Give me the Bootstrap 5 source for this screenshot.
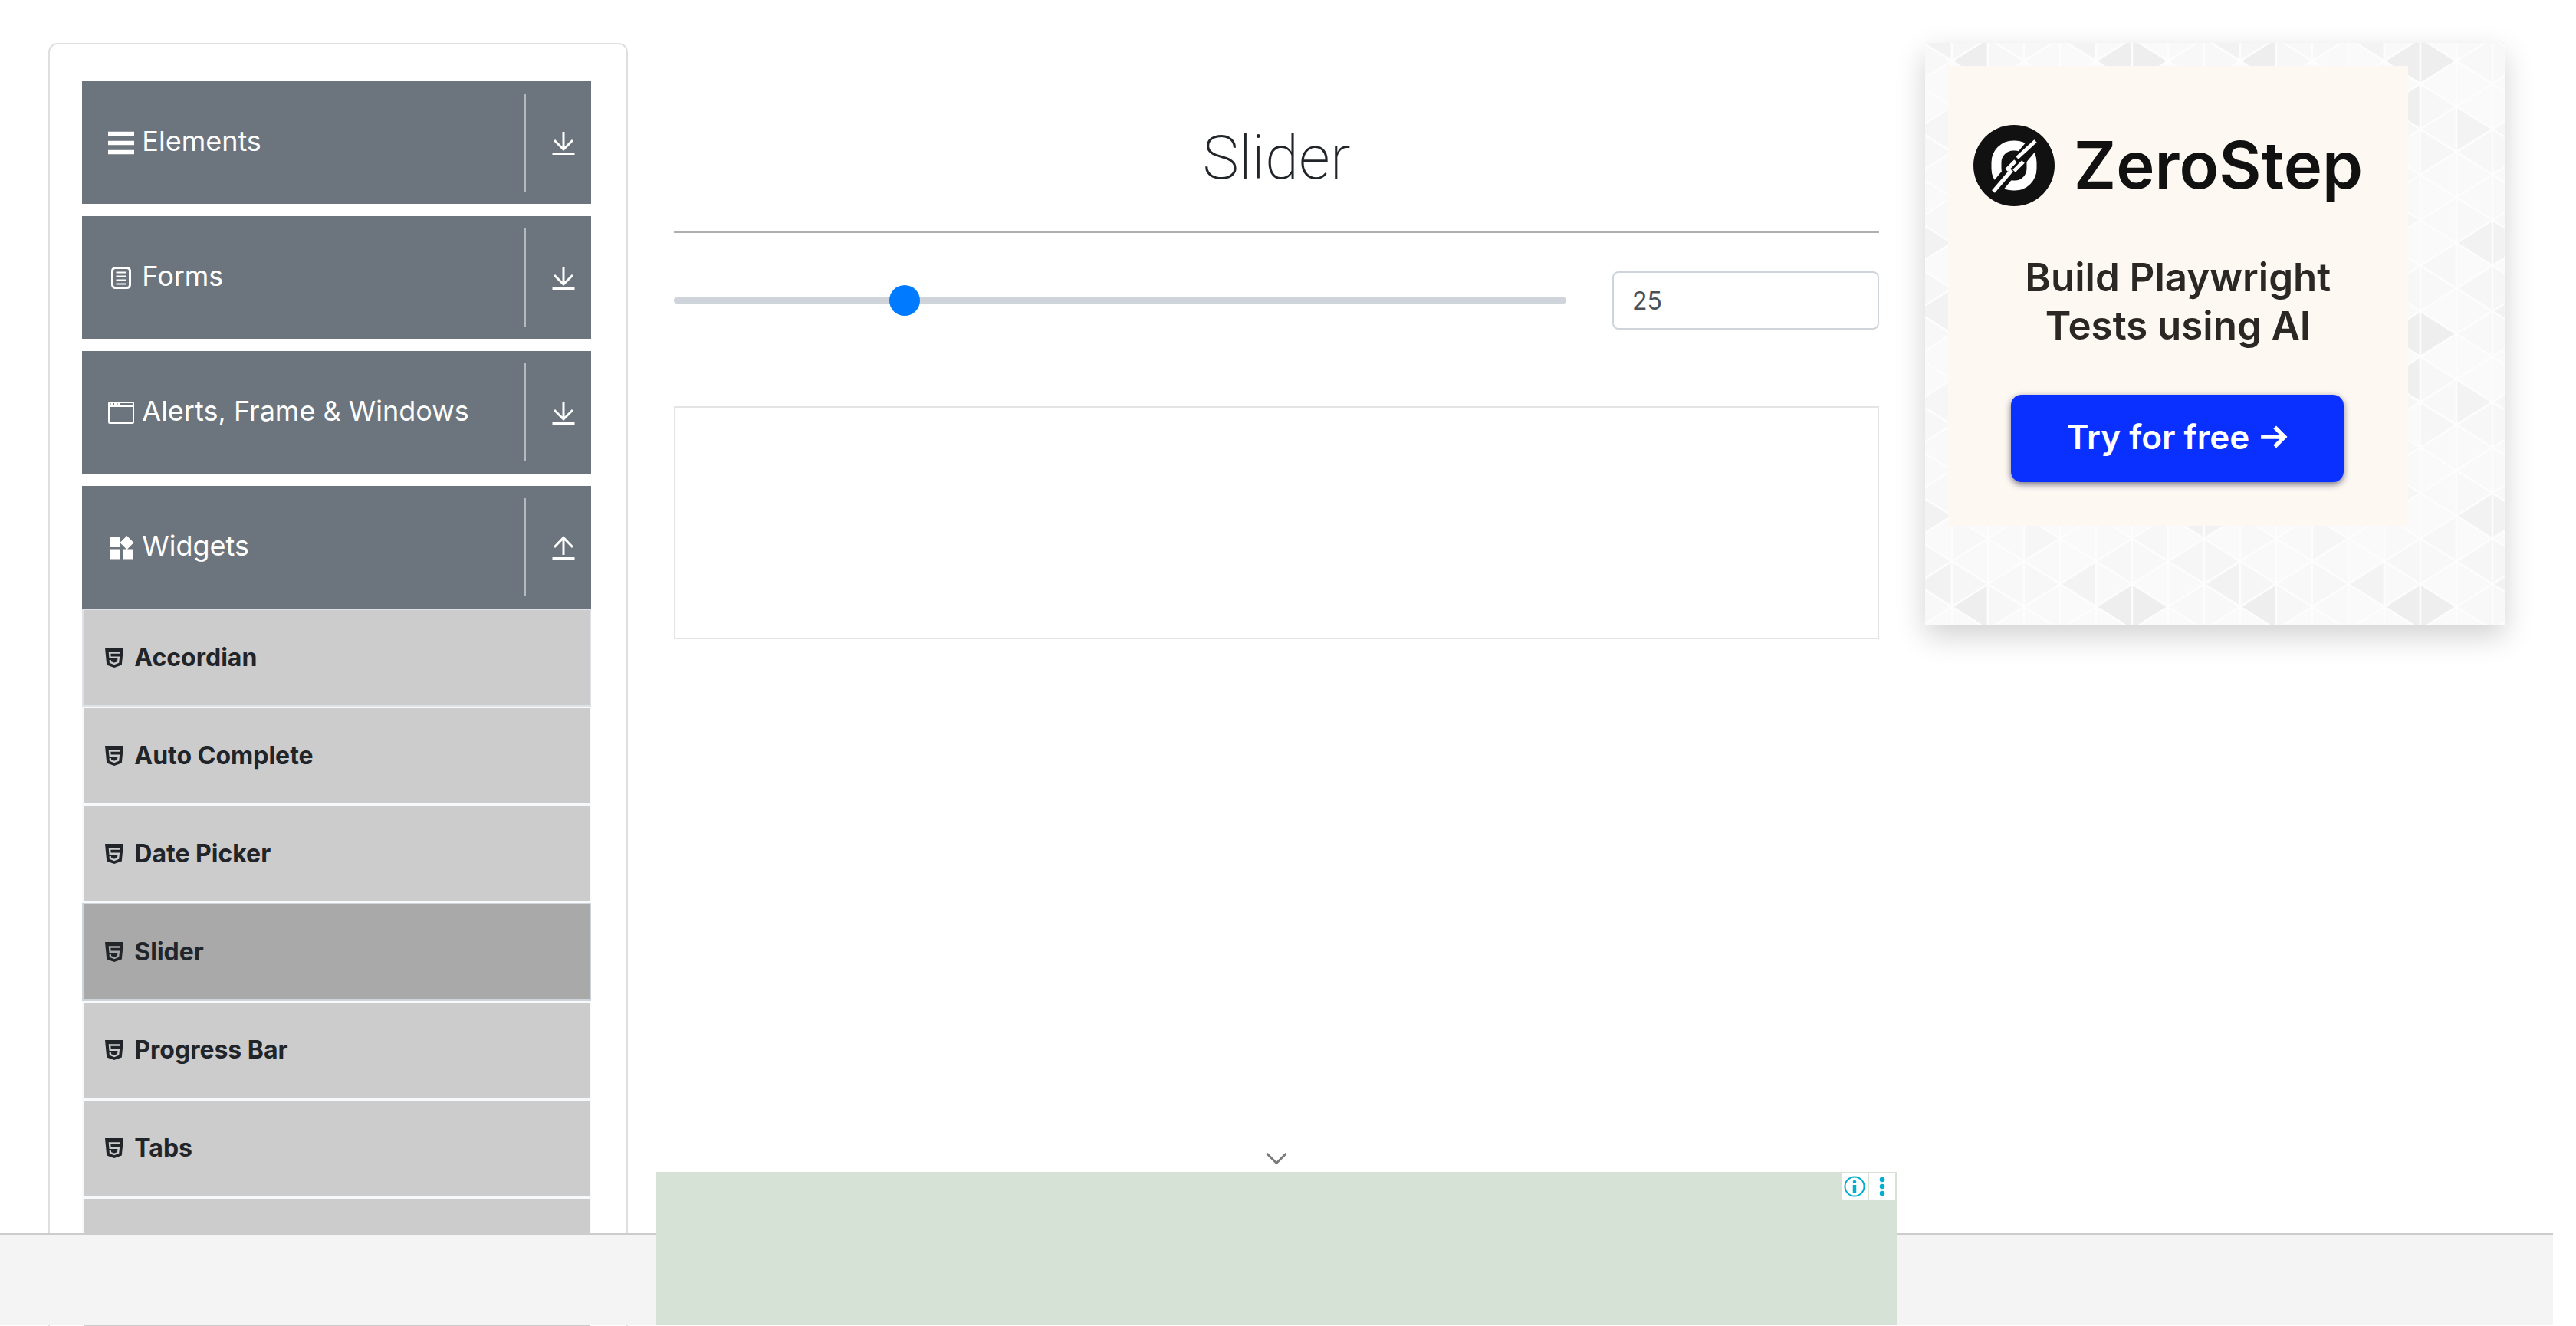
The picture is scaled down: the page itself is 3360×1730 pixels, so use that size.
<!DOCTYPE html>
<html lang="en">
<head>
<meta charset="utf-8">
<meta name="viewport" content="width=device-width, initial-scale=1">
<title>Slider</title>
<link href="https://cdn.jsdelivr.net/npm/bootstrap@5.3.0/dist/css/bootstrap.min.css" rel="stylesheet">
<style>
  body { font-family: Inter, "Liberation Sans", sans-serif; color: #212529; background: #fff; font-size: 32px; line-height: 48px; }
  .page-shell { height: 100vh; overflow: hidden; padding-right: 30px; }
  .page-body { width: 98%; padding: 56px 30px 0; --bs-gutter-x: 60px; }
  .row { --bs-gutter-x: 60px; }

  .side-panel { border: 2px solid #dfdfdf; border-radius: 12px; padding: 48px 46px 48px 42px; height: 1800px; }
  .group-btn { height: 160px; background: #6c757d; color: #fff; border: 0; border-radius: 0; padding: 2px 18px 0 33px; font-size: 36px; line-height: 48px; text-align: left; }
  .group-btn .group-icon { width: 36px; height: 36px; }
  .group-btn .group-name { padding: 0 0 6px 9px; }
  .group-btn .group-rule { width: 2px; height: 128px; background: #b5babe; margin: 0 31px 2px 0; }
  .group-btn .group-arrow { width: 36px; height: 36px; }
  .group-list .list-group-item { height: 128px; padding: 0 28px; background: #ccc; border: 2px solid #f8f9fa; border-radius: 0; color: #212529; font-weight: 700; font-size: 32px; }
  .group-list .list-group-item.item-first { border-color: #dee2e6; }
  .group-list .list-group-item.item-current { background: #a9a9a9; border-color: #ced4da; }
  .group-list svg { width: 24px; height: 28px; margin-right: 14px; }

  .page-title { padding: 102px 0 48px; font-family: Roboto, Inter, sans-serif; font-size: 80px; line-height: 96px; font-weight: 200; border-bottom: 2px solid #afafaf; margin-bottom: 50px; }
  .form-range { height: 40px; }
  .form-range::-webkit-slider-runnable-track { height: 8px; background: #ced4da; border-radius: 4px; }
  .form-range::-webkit-slider-thumb { width: 40px; height: 40px; margin-top: -16px; background: #007bff; border-radius: 50%; }
  .value-box { height: 76px; border: 2px solid #ced4da; border-radius: 8px; padding: 0 24px; font-size: 32px; color: #495057; }
  .empty-frame { margin-top: 100px; height: 304px; border: 2px solid #e4e4e4; }

  .promo { height: 760px; padding: 30px; box-shadow: 0 14px 36px rgba(0, 0, 0, .18); }
  .promo-pattern { position: absolute; inset: 0; width: 100%; height: 100%; }
  .promo-art { width: 600px; height: 600px; background: #fdf8f2; color: #111; padding-top: 76px; }
  .promo-brand { font-size: 85px; line-height: 108px; font-weight: 600; padding-left: 32px; gap: 24px; }
  .promo-brand svg { width: 108px; height: 108px; flex: none; }
  .promo-copy { font-size: 51px; line-height: 63px; font-weight: 600; color: #2a2724; margin-top: 60px; }
  .promo-btn { width: 434px; height: 114px; margin: 59px 0 0 82px; border: 0; border-radius: 14px; background: #0a30ff; color: #fff; font-size: 44px; line-height: 54px; font-weight: 600; box-shadow: 0 3px 9px rgba(20, 20, 60, .6); gap: 12px; padding-bottom: 10px; }
  .promo-btn svg { width: 38px; height: 38px; }

  .page-footer { position: fixed; left: 0; right: 30px; bottom: 1px; height: 120px; background: #f4f4f4; border-top: 2px solid #ccc; }
  .anchor-wrap { position: fixed; left: 0; right: 30px; bottom: 1px; z-index: 5; pointer-events: none; }
  .anchor-wrap button, .anchor-wrap a { pointer-events: auto; }
  .anchor-close { border: 0; background: transparent; padding: 0; width: 48px; height: 36px; line-height: 0; }
  .anchor-ad { width: 1618px; height: 200px; background: #d7e2d6; padding: 2px; gap: 2px; }
  .ad-choice { width: 34px; height: 34px; background: #fff; line-height: 0; }
</style>
<script src="https://cdn.jsdelivr.net/npm/bootstrap@5.3.0/dist/js/bootstrap.bundle.min.js"></script>
</head>
<body>
<svg class="d-none" aria-hidden="true">
  <symbol id="i-down" viewBox="0 0 36 36"><path d="M18 3v22M6 14l12 12 12-12M3.500 31.500h29" fill="none" stroke="currentColor" stroke-width="3"/></symbol>
  <symbol id="i-up" viewBox="0 0 36 36"><path d="M18 27V5M6 17L18 4.500 30 17M3.500 31.500h29" fill="none" stroke="currentColor" stroke-width="3"/></symbol>
  <symbol id="i-html" viewBox="2 0 24 28"><path d="M2 1h24l-2.200 22.500L14 27l-9.800-3.500z" fill="currentColor"/><path d="M21.500 7.500H8l.6 6.200h11.200l-.7 6.300-5.100 1.900-5-1.900-.3-2.800" fill="none" stroke="var(--cut, #ccc)" stroke-width="2.400"/></symbol>
</svg>

<div class="page-shell">
  <div class="container-fluid page-body">
    <div class="row">
      <nav class="col-3" aria-label="Sections">
        <div class="side-panel">
          <button type="button" class="btn group-btn d-flex align-items-center w-100 mb-3">
            <svg class="group-icon" viewBox="0 0 36 36"><path d="M1 5.500h34M1 17.500h34M1 29.500h34" stroke="#fff" stroke-width="5.500"/></svg>
            <span class="group-name flex-grow-1">Elements</span><span class="group-rule"></span>
            <svg class="group-arrow"><use href="#i-down"/></svg>
          </button>
          <button type="button" class="btn group-btn d-flex align-items-center w-100 mb-3">
            <svg class="group-icon" viewBox="0 0 36 36" fill="none" stroke="#fff"><rect x="6.500" y="4.500" width="23" height="26" rx="4" stroke-width="3"/><path d="M11.500 10.500h13M11.500 15.500h13M11.500 20.500h13M11.500 25.500h13" stroke-width="2"/></svg>
            <span class="group-name flex-grow-1">Forms</span><span class="group-rule"></span>
            <svg class="group-arrow"><use href="#i-down"/></svg>
          </button>
          <button type="button" class="btn group-btn d-flex align-items-center w-100 mb-3">
            <svg class="group-icon" viewBox="0 0 36 36" fill="none" stroke="#fff" stroke-width="2"><rect x="2" y="4" width="32" height="27" rx="1.500"/><path d="M2 9h32"/><path d="M4.500 6.500h3M9 6.500h3M13.500 6.500h3" stroke-width="3"/></svg>
            <span class="group-name flex-grow-1">Alerts, Frame &amp; Windows</span><span class="group-rule"></span>
            <svg class="group-arrow"><use href="#i-down"/></svg>
          </button>
          <button type="button" class="btn group-btn d-flex align-items-center w-100" aria-expanded="true">
            <svg class="group-icon" viewBox="0 0 36 36" fill="#fff"><path d="M4 4h13v13H4zM4 19.500h13v13H4zM20 19.500h13v13H20zM25.500 2l9 9-9 9-9-9z"/></svg>
            <span class="group-name flex-grow-1">Widgets</span><span class="group-rule"></span>
            <svg class="group-arrow"><use href="#i-up"/></svg>
          </button>
          <div class="group-list">
            <a href="#" class="list-group-item item-first d-flex align-items-center"><svg><use href="#i-html"/></svg>Accordian</a>
            <a href="#" class="list-group-item d-flex align-items-center"><svg><use href="#i-html"/></svg>Auto Complete</a>
            <a href="#" class="list-group-item d-flex align-items-center"><svg><use href="#i-html"/></svg>Date Picker</a>
            <a href="#" class="list-group-item item-current d-flex align-items-center" aria-current="page"><svg style="--cut:#a9a9a9"><use href="#i-html"/></svg>Slider</a>
            <a href="#" class="list-group-item d-flex align-items-center"><svg><use href="#i-html"/></svg>Progress Bar</a>
            <a href="#" class="list-group-item d-flex align-items-center"><svg><use href="#i-html"/></svg>Tabs</a>
            <div class="list-group-item"></div>
            <div class="list-group-item"></div>
          </div>
        </div>
      </nav>

      <main class="col-6">
        <h1 class="page-title text-center">Slider</h1>
        <div class="row align-items-center">
          <div class="col-9 d-flex"><input type="range" class="form-range" id="range" min="0" max="100" value="25" aria-label="Slider"></div>
          <div class="col-3"><input type="text" class="form-control value-box" id="rangeValue" value="25" aria-label="Slider value"></div>
        </div>
        <div class="empty-frame"></div>
      </main>

      <aside class="col-3">
        <div class="promo position-relative">
          <svg class="promo-pattern" aria-hidden="true">
            <defs><pattern id="tri" width="376" height="356" x="-12" y="-6" patternUnits="userSpaceOnUse"></pattern></defs>
            <rect width="100%" height="100%" fill="url(#tri)"/>
          </svg>
          <div class="promo-art position-relative">
            <div class="promo-brand d-flex align-items-center">
              <svg viewBox="0 0 108 108"><circle cx="54" cy="54" r="53" fill="#111"/>
                <rect x="31" y="28" width="46" height="52" rx="22" fill="none" stroke="#fff" stroke-width="13"/>
                <path d="M27 88L82 22" stroke="#111" stroke-width="17"/>
                <path d="M58 44L82 22M27 88L51 60M44 60l12-12M54 61l12-12" stroke="#fff" stroke-width="5"/></svg>
              <span>ZeroStep</span>
            </div>
            <div class="promo-copy text-center">Build Playwright<br>Tests using AI</div>
            <button type="button" class="btn promo-btn d-flex align-items-center justify-content-center">Try for free
              <svg viewBox="0 0 36 36"><path d="M3 18h28M20 6l12 12-12 12" fill="none" stroke="#fff" stroke-width="5"/></svg></button>
          </div>
        </div>
      </aside>
    </div>
  </div>
</div>

<footer class="page-footer"></footer>
<div class="anchor-wrap d-flex flex-column align-items-center">
  <button type="button" class="anchor-close" aria-label="Collapse"><svg width="48" height="36" viewBox="0 0 48 36"><path d="M11.500 12L24 24.500 36.500 12" fill="none" stroke="#7a7a7a" stroke-width="3"/></svg></button>
  <div class="anchor-ad d-flex justify-content-end">
    <a href="#" class="ad-choice" aria-label="Ad information"><svg width="34" height="34" viewBox="0 0 34 34"><circle cx="17" cy="17" r="12.500" fill="none" stroke="#00aecd" stroke-width="2"/><circle cx="17" cy="11" r="2.300" fill="#00aecd"/><path d="M17 15v10" stroke="#00aecd" stroke-width="4.500"/></svg></a>
    <a href="#" class="ad-choice" aria-label="Ad options"><svg width="34" height="34" viewBox="0 0 34 34" fill="#00aecd"><circle cx="17" cy="8" r="3.300"/><circle cx="17" cy="17" r="3.300"/><circle cx="17" cy="26" r="3.300"/></svg></a>
  </div>
</div>

<script>
  // Triangle tile: 8 strips of 47px; vertices alternate by half a step on neighbouring lines.
  const W = 47, S = 356 / 6, tile = document.getElementById('tri');
  const add = (pts, fill) => {
    const p = document.createElementNS('http://www.w3.org/2000/svg', 'polygon');
    p.setAttribute('points', pts); p.setAttribute('fill', fill);
    p.setAttribute('stroke', '#fdfdfd'); p.setAttribute('stroke-width', '2.5');
    tile.appendChild(p);
  };
  const light = ['#f9f9f9', '#f7f7f7', '#fafafa', '#f8f8f8', '#f9f9f9', '#f6f6f6', '#fafafa'];
  // key: strip, then half step of the triangle's middle
  const dark = { '1,1': '#eeeeee', '5,1': '#eeeeee', '6,1': '#eeeeee', '5,3': '#efefef', '0,0': '#f2f2f2',
    '7,9': '#f2f2f2', '0,9': '#f2f2f2', '4,12': '#f3f3f3', '7,4': '#f3f3f3', '2,6': '#f4f4f4' };
  for (let c = 0; c < 8; c++) for (let j = 0; j <= 12; j++) {
    const y = j * S / 2, x0 = c * W, x1 = x0 + W, k = j % 12;
    const apexLeft = (c + j) % 2 === 0;
    const pts = apexLeft ? `${x0},${y} ${x1},${y - S / 2} ${x1},${y + S / 2}` : `${x1},${y} ${x0},${y - S / 2} ${x0},${y + S / 2}`;
    add(pts, dark[c + ',' + k] || dark[c + ',' + (k || 12)] || light[(c * 5 + k * 3 + c * k) % 7]);
  }
  const range = document.getElementById('range'), box = document.getElementById('rangeValue');
  range.addEventListener('input', () => { box.value = range.value; });
</script>
</body>
</html>
